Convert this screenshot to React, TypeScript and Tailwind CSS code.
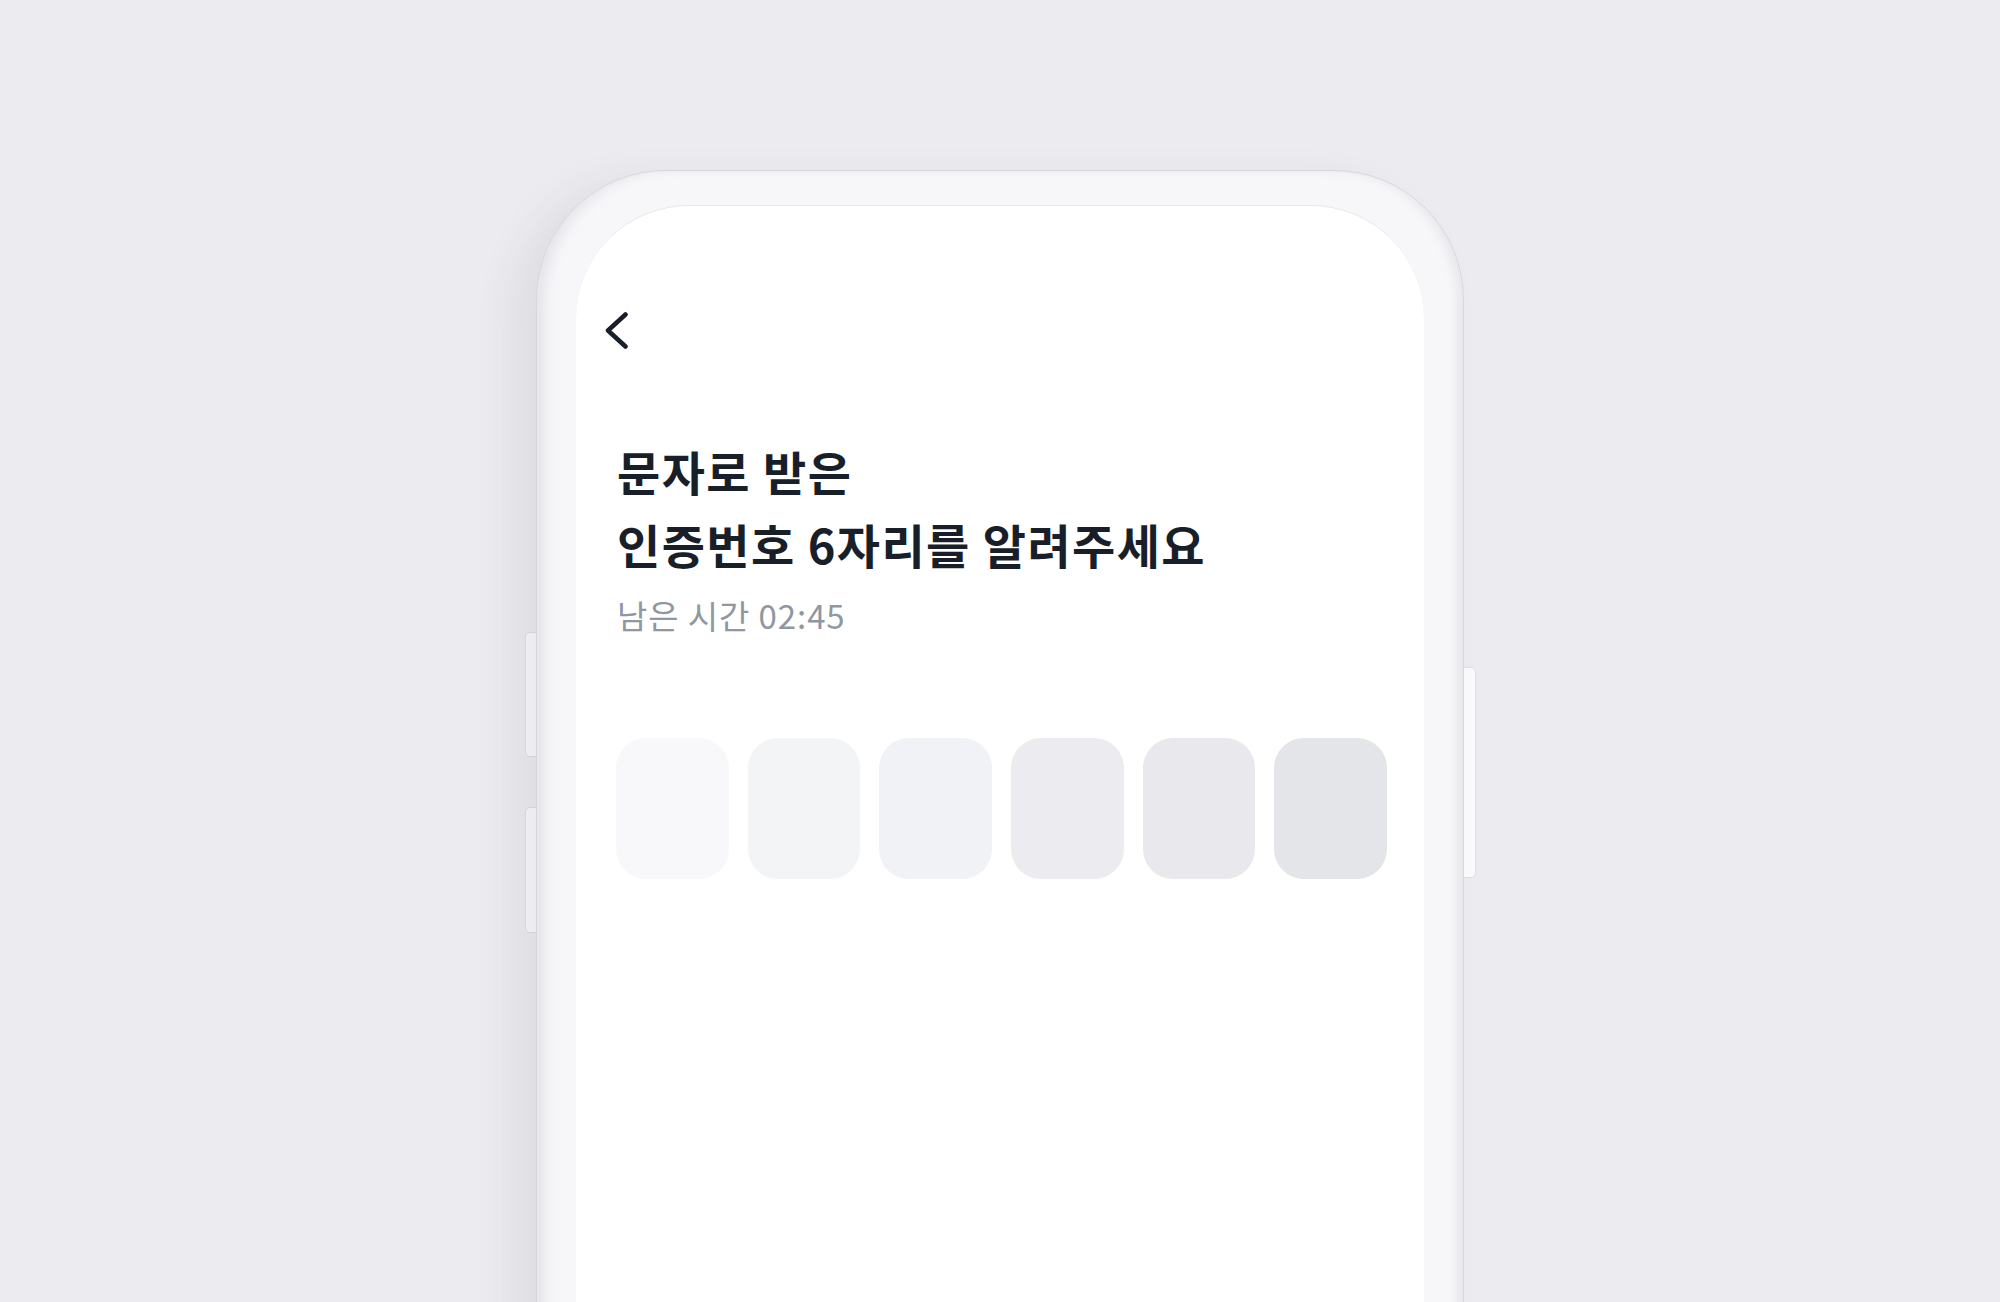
import React from "react";

const cells = ["bg-[#f8f8fa]", "bg-[#f3f4f6]", "bg-[#f1f2f5]", "bg-[#ececf0]", "bg-[#e9e9ed]", "bg-[#e4e5e9]"];

const BackIcon = () => (
  <svg width="24" height="37" viewBox="0 0 24 37" fill="none">
    <path d="M20.5 2.5L3 18.5L20.5 34.5" stroke="#191f28" strokeWidth="4.5" strokeLinecap="round" strokeLinejoin="round" />
  </svg>
);

const App = () => {
  return (
    <div className="h-[1302px] w-full overflow-hidden bg-[#ececf0] flex justify-center pt-[170px]" style={{ fontFamily: '"Noto Sans CJK KR", "Noto Sans", sans-serif' }}>
      {/* Phone body */}
      <div className="relative w-[928px] h-[1200px] shrink-0">
        {/* side keys */}
        <div className="absolute left-[-11px] top-[462px] w-[12px] h-[125px] rounded-l-[5px] bg-[#fafafc] border border-[#dedfe4]"></div>
        <div className="absolute left-[-11px] top-[637px] w-[12px] h-[126px] rounded-l-[5px] bg-[#fafafc] border border-[#dedfe4]"></div>
        <div className="absolute right-[-12px] top-[497px] w-[13px] h-[211px] rounded-r-[5px] bg-[#fafafc] border border-[#dedfe4]"></div>

        <div className="relative h-full rounded-t-[130px] bg-[#f7f7fa] px-[39px] pt-[34px] border border-[#d6d7dc] shadow-[-24px_10px_40px_rgba(40,45,60,0.07),inset_12px_0_12px_-4px_rgba(200,202,210,0.4),inset_-10px_0_10px_-4px_rgba(200,202,210,0.35)]">
          {/* Screen */}
          <div className="h-full rounded-t-[113px] bg-white border-t border-[#e6e7eb] pl-[41px] pr-[38px] pt-[106px]">
            <div className="ml-[-12px]">
              <BackIcon />
            </div>

            <h1 className="mt-[85px] text-[47px] leading-[73px] font-bold text-[#191f28] tracking-[1.4px]">
              문자로 받은
              <br />
              인증번호 6자리를 알려주세요
            </h1>
            <p className="mt-[15px] text-[33px] leading-[40px] text-[#8f97a1] tracking-[0.9px]">남은 시간 02:45</p>

            <div className="mt-[103px] grid grid-cols-6 gap-[19px] w-[771px] -ml-px">
              {cells.map((c, i) => (
                <div key={i} className={`h-[141px] rounded-[30px] ${c}`}></div>
              ))}
            </div>
          </div>
        </div>
      </div>
    </div>
  );
};

export default App;
